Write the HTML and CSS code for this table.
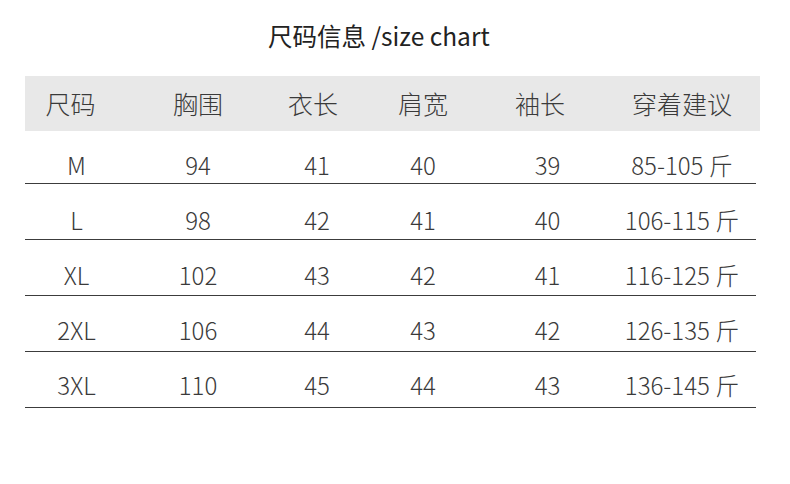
FILE: index.html
```html
<!DOCTYPE html>
<html lang="zh">
<head>
<meta charset="utf-8">
<title>尺码信息</title>
<link rel="stylesheet" href="styles.css">
</head>
<body>
<div class="page">
  <h1 class="title">尺码信息 /size chart</h1>
  <div class="head">
    <div class="c1">尺码</div>
    <div class="c2">胸围</div>
    <div class="c3">衣长</div>
    <div class="c4">肩宽</div>
    <div class="c5">袖长</div>
    <div class="c6">穿着建议</div>
  </div>
  <div class="rows">
    <div class="row"><div>M</div><div>94</div><div>41</div><div>40</div><div>39</div><div>85-105 斤</div></div>
    <div class="row"><div>L</div><div>98</div><div>42</div><div>41</div><div>40</div><div>106-115 斤</div></div>
    <div class="row"><div>XL</div><div>102</div><div>43</div><div>42</div><div>41</div><div>116-125 斤</div></div>
    <div class="row"><div>2XL</div><div>106</div><div>44</div><div>43</div><div>42</div><div>126-135 斤</div></div>
    <div class="row"><div>3XL</div><div>110</div><div>45</div><div>44</div><div>43</div><div>136-145 斤</div></div>
  </div>
</div>
</body>
</html>
```

FILE: styles.css
```css
html, body {
  margin: 0;
  padding: 0;
  background: #ffffff;
}

body {
  font-family: "Noto Sans CJK SC", "Noto Sans", sans-serif;
  color: #333333;
}

.page {
  width: 790px;
  padding: 24px 0 0 25px;
  box-sizing: border-box;
}

.title {
  margin: 0 0 28px 243px;
  font-size: 24.5px;
  line-height: 24px;
  font-weight: 400;
  color: #222222;
  white-space: nowrap;
}

.head,
.row {
  display: grid;
  grid-template-columns: 103px 140px 98px 114px 135px 134px;
  text-align: center;
}

.head {
  width: 735px;
  height: 55px;
  background: #e8e8e8;
  align-items: center;
  font-family: "Noto Sans CJK SC Light", "Noto Sans CJK SC DemiLight", "Noto Sans CJK SC", sans-serif;
  font-size: 25px;
  line-height: 1;
  font-weight: 300;
  color: #3a3a3a;
}

.head .c1 { padding-right: 12px; }
.head .c3 { padding-right: 8px; }
.head .c5 { padding-right: 15px; }

.rows {
  width: 731px;
}

.row {
  height: 55px;
  box-sizing: content-box;
  border-bottom: 1px solid #3c3c3c;
  align-items: end;
  font-family: "Noto Sans CJK SC Light", "Noto Sans CJK SC DemiLight", "Noto Sans CJK SC", sans-serif;
  font-size: 24px;
  line-height: 1;
  font-weight: 300;
  color: #3a3a3a;
}

.row > div {
  padding-bottom: 7px;
}

.row:first-child {
  height: 52px;
}

.row:first-child > div {
  padding-bottom: 6px;
}

.row:nth-child(3) > div {
  padding-bottom: 8px;
}

.row:nth-child(4) > div {
  padding-bottom: 9px;
}

.row:nth-child(5) > div {
  padding-bottom: 10px;
}
```
